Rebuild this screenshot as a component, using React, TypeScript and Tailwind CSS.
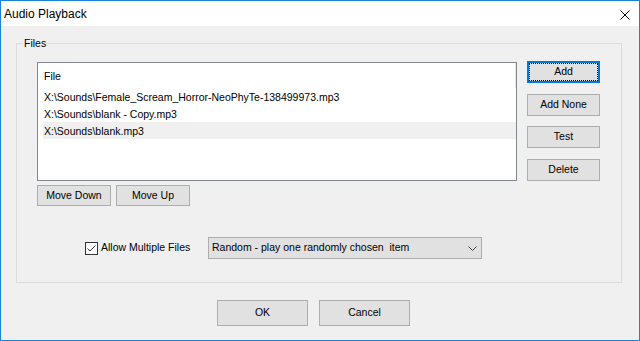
import React from "react";

function Btn({ label, className = "" }: { label: string; className?: string }) {
  return (
    <div
      className={
        "flex items-center justify-center bg-[#e1e1e1] border border-[#adadad] text-black " + className
      }
    >
      {label}
    </div>
  );
}

export default function App() {
  const rows = [
    "X:\\Sounds\\Female_Scream_Horror-NeoPhyTe-138499973.mp3",
    "X:\\Sounds\\blank - Copy.mp3",
    "X:\\Sounds\\blank.mp3",
  ];
  return (
    <div className="w-[640px] h-[341px] border border-[#1883d7] flex flex-col bg-[#f0f0f0] font-['Liberation_Sans',Arial,sans-serif] text-[10.5px] text-black select-none">
      {/* Title bar */}
      <div className="h-[25px] bg-white flex items-center justify-between pl-[3px] pr-[9px]">
        <span className="text-[12px] leading-[14px] mt-[1px]">Audio Playback</span>
        <svg width="10" height="10" viewBox="0 0 10 10" className="mt-[2px]">
          <path d="M0.5 0.5 L9.5 9.5 M9.5 0.5 L0.5 9.5" stroke="#000" strokeWidth="1" fill="none" />
        </svg>
      </div>

      {/* Content */}
      <div className="flex-1 flex flex-col">
        {/* Group box */}
        <div className="relative ml-[15px] mt-[17px] w-[606px] h-[240px] border border-[#dcdcdc] flex flex-col pl-[20px] pt-[17px]">
          <span className="absolute left-[6px] top-[-7px] px-[1px] bg-[#f0f0f0] leading-[12px]">Files</span>

          <div className="flex">
            {/* Left column */}
            <div className="flex flex-col">
              <div className="mt-[1px] w-[480px] h-[119px] border border-[#828790] bg-white flex flex-col">
                <div className="h-[25px] pt-[4px] pl-[6px] leading-[18px] border-r border-[#e5e5e5]">File</div>
                <div className="flex flex-col pl-[5px]">
                  {rows.map((r, i) => (
                    <div
                      key={r}
                      className={
                        "h-[17px] leading-[18px] pl-[1px] whitespace-nowrap " + (i === 2 ? "bg-[#f0f0f0]" : "")
                      }
                    >
                      {r}
                    </div>
                  ))}
                </div>
              </div>
              <div className="flex gap-[5px] mt-[4px]">
                <Btn label="Move Down" className="w-[74px] h-[21px]" />
                <Btn label="Move Up" className="w-[74px] h-[21px]" />
              </div>
            </div>

            {/* Right column */}
            <div className="flex flex-col ml-[10px]">
              <div className="w-[73px] h-[22px] border-2 border-[#0078d7] bg-[#e1e1e1] flex">
                <span className="flex-1 flex items-center justify-center border border-dotted border-black">Add</span>
              </div>
              <Btn label="Add None" className="w-[73px] h-[22px] mt-[11px]" />
              <Btn label="Test" className="w-[73px] h-[22px] mt-[10px]" />
              <Btn label="Delete" className="w-[73px] h-[22px] mt-[11px]" />
            </div>
          </div>

          {/* Checkbox + dropdown */}
          <div className="flex items-center mt-[31px] h-[22px]">
            <div className="ml-[48px] w-[13px] h-[13px] border border-[#333333] bg-white flex items-center justify-center">
              <svg width="11" height="11" viewBox="0 0 11 11">
                <path d="M1.5 5.5 L4 8 L9.5 2.5" stroke="#333333" strokeWidth="1" fill="none" />
              </svg>
            </div>
            <span className="ml-[3px] w-[107px] whitespace-nowrap">Allow Multiple Files</span>
            <div className="w-[274px] h-[22px] bg-[#e1e1e1] border border-[#adadad] flex items-center justify-between pl-[3px] pr-[4px]">
              <span className="whitespace-pre">Random - play one randomly chosen  item</span>
              <svg width="9" height="5" viewBox="0 0 9 5">
                <path d="M0.5 0.5 L4.5 4.5 L8.5 0.5" stroke="#444444" strokeWidth="1" fill="none" />
              </svg>
            </div>
          </div>
        </div>

        {/* OK / Cancel */}
        <div className="flex gap-[11px] mt-[17px] ml-[216px]">
          <Btn label="OK" className="w-[91px] h-[26px]" />
          <Btn label="Cancel" className="w-[91px] h-[26px]" />
        </div>
      </div>
    </div>
  );
}
